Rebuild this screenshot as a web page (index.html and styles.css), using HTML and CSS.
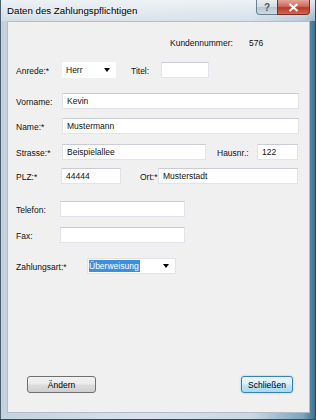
FILE: index.html
```html
<!DOCTYPE html>
<html lang="de">
<head>
  <meta charset="UTF-8" />
  <title>Daten des Zahlungspflichtigen</title>
  <link rel="stylesheet" href="styles.css">
</head>
<body>
  <div class="window">
    <div class="titlebar">
      <span class="title">Daten des Zahlungspflichtigen</span>
      <div class="caption-btns">
        <span class="cap-btn help">?</span>
        <span class="cap-btn close">
          <svg width="11" height="9" viewBox="0 0 11 9"><path d="M1.5 1 L9.5 8 M9.5 1 L1.5 8" stroke="#fff" stroke-width="2.2" /></svg>
        </span>
      </div>
    </div>

    <div class="client">
      <div class="row row-kunde">
        <span class="kd-label">Kundennummer:</span>
        <span>576</span>
      </div>

      <div class="row row-anrede">
        <span class="label w46">Anrede:*</span>
        <div class="combo combo-herr"><span>Herr</span><span class="arrow"></span></div>
        <span class="label label-titel">Titel:</span>
        <div class="field w48"></div>
      </div>

      <div class="row row-vorname">
        <span class="label w46">Vorname:</span>
        <div class="field w237">Kevin</div>
      </div>

      <div class="row row-name">
        <span class="label w46">Name:*</span>
        <div class="field w237">Mustermann</div>
      </div>

      <div class="row row-strasse">
        <span class="label w46">Strasse:*</span>
        <div class="field w144">Beispielallee</div>
        <span class="label label-hausnr">Hausnr.:</span>
        <div class="field w41">122</div>
      </div>

      <div class="row row-plz">
        <span class="label w45">PLZ:*</span>
        <div class="field w60">44444</div>
        <span class="label label-ort">Ort:*</span>
        <div class="field w140">Musterstadt</div>
      </div>

      <div class="row row-telefon">
        <span class="label w44">Telefon:</span>
        <div class="field w125"></div>
      </div>

      <div class="row row-fax">
        <span class="label w44">Fax:</span>
        <div class="field w125"></div>
      </div>

      <div class="row row-zahlung">
        <span class="label w71">Zahlungsart:*</span>
        <div class="combo combo-zahlung"><span class="selected">Überweisung</span><span class="arrow"></span></div>
      </div>

      <div class="buttons">
        <button class="btn btn-aendern">Ändern</button>
        <button class="btn btn-default">Schließen</button>
      </div>
    </div>
  </div>
</body>
</html>
```

FILE: styles.css
```css
/* Reset */
* {
  margin: 0; padding: 0; box-sizing: border-box;
}
body {
  background: #fff;
  font-family: "Liberation Sans", Arial, sans-serif;
}

/* Window frame */
.window {
  width: 316px;
  height: 420px;
  display: flex;
  flex-direction: column;
  background: linear-gradient(to right, #c3d2de 0%, #d9e2ea 45%, #c9d8e3 80%, #7ea6bf 96%, #3d7192 100%);
  border-left: 1px solid #4b5f70;
  border-right: 1px solid #2f4a5e;
  border-bottom: 1px solid #2f4a5e;
}

/* Title bar */
.titlebar {
  height: 21px;
  display: flex;
  justify-content: space-between;
  align-items: flex-start;
  background: linear-gradient(to bottom, rgba(240, 244, 247, 0.9), rgba(220, 229, 236, 0.6));
}
.title {
  font-size: 9.7px;
  color: #000;
  padding: 5px 0 0 6px;
  text-shadow: 0 0 4px #fff;
}
.caption-btns {
  display: flex;
  margin-right: 5px;
}
.cap-btn {
  height: 15px;
  display: flex;
  align-items: center;
  justify-content: center;
  border: 1px solid #6d7f8d;
  border-top: none;
}
.help {
  width: 21px;
  border-radius: 0 0 0 4px;
  border-right: none;
  background: linear-gradient(to bottom, #e9eef2 0%, #d3dce3 50%, #bac7d1 51%, #cfd9e1 100%);
  color: #4b5b68;
  font-size: 10px;
  font-weight: bold;
}
.close {
  width: 33px;
  border-radius: 0 0 4px 0;
  border-color: #7a2d23;
  background: linear-gradient(to bottom, #e3a59a 0%, #cf6a5b 45%, #b93a29 55%, #d0664f 100%);
}

/* Client area */
.client {
  flex: 1;
  margin: 0 5px 6px 6px;
  background: #f0f0f0;
  border: 1px solid #b3bdc6;
  display: flex;
  flex-direction: column;
  padding-left: 8px;
  font-size: 8.5px;
  color: #111;
}
.row {
  display: flex;
  align-items: center;
  height: 16px;
}
.row-kunde { margin-top: 13px; padding-left: 154px; }
.row-anrede { margin-top: 11px; }
.row-vorname { margin-top: 15px; }
.row-name { margin-top: 9px; }
.row-strasse { margin-top: 10px; }
.row-plz { margin-top: 8px; }
.row-telefon { margin-top: 17px; }
.row-fax { margin-top: 10px; }
.row-zahlung { margin-top: 15px; }

.kd-label { width: 79px; }

.label { flex-shrink: 0; padding-top: 2px; }
.w44 { width: 44px; }
.w45 { width: 45px; }
.w46 { width: 46px; }
.w71 { width: 71px; }
.label-titel { margin-left: 15px; width: 30px; }
.label-hausnr { margin-left: 11px; width: 40px; }
.label-ort { margin-left: 19px; width: 18px; }

/* Text boxes */
.field {
  height: 16px;
  background: #fff;
  border: 1px solid #e2e3ea;
  border-top-color: #c9ccd3;
  padding: 2px 0 0 4px;
  white-space: nowrap;
}
.w48 { width: 48px; }
.w237 { width: 237px; }
.w144 { width: 144px; }
.w41 { width: 41px; }
.w60 { width: 60px; }
.w140 { width: 140px; }
.w125 { width: 125px; }

/* Combo boxes */
.combo {
  height: 16px;
  background: #fff;
  display: flex;
  align-items: center;
  justify-content: space-between;
  padding: 0 6px 0 2px;
}
.combo-herr { width: 54px; padding-left: 4px; }
.combo-zahlung {
  width: 89px;
  border: 1px solid #e2e3ea;
  padding-left: 1px;
}
.selected {
  background: #3f8fe0;
  color: #fff;
  padding: 1px 1px 1px 0;
  line-height: 10px;
}
.arrow {
  width: 0;
  height: 0;
  border-left: 3.5px solid transparent;
  border-right: 3.5px solid transparent;
  border-top: 4px solid #000;
}

/* Buttons */
.buttons {
  margin-top: auto;
  margin-bottom: 19px;
  display: flex;
  justify-content: space-between;
  align-items: center;
  padding: 0 16px 0 11px;
}
.btn {
  height: 17px;
  font-family: "Liberation Sans", Arial, sans-serif;
  font-size: 8.5px;
  color: #000;
  border: 1px solid #707070;
  border-radius: 3px;
  background: linear-gradient(to bottom, #f2f2f2 0%, #ebebeb 48%, #dddddd 52%, #cfcfcf 100%);
}
.btn-aendern { width: 69px; }
.btn-default {
  width: 52px;
  border-color: #3c7fb1;
  background: linear-gradient(to bottom, #eaf6fd 0%, #d9f0fc 48%, #bee6fd 52%, #a7d9f5 100%);
  box-shadow: 0 0 2px #7fc6f2;
}
```
